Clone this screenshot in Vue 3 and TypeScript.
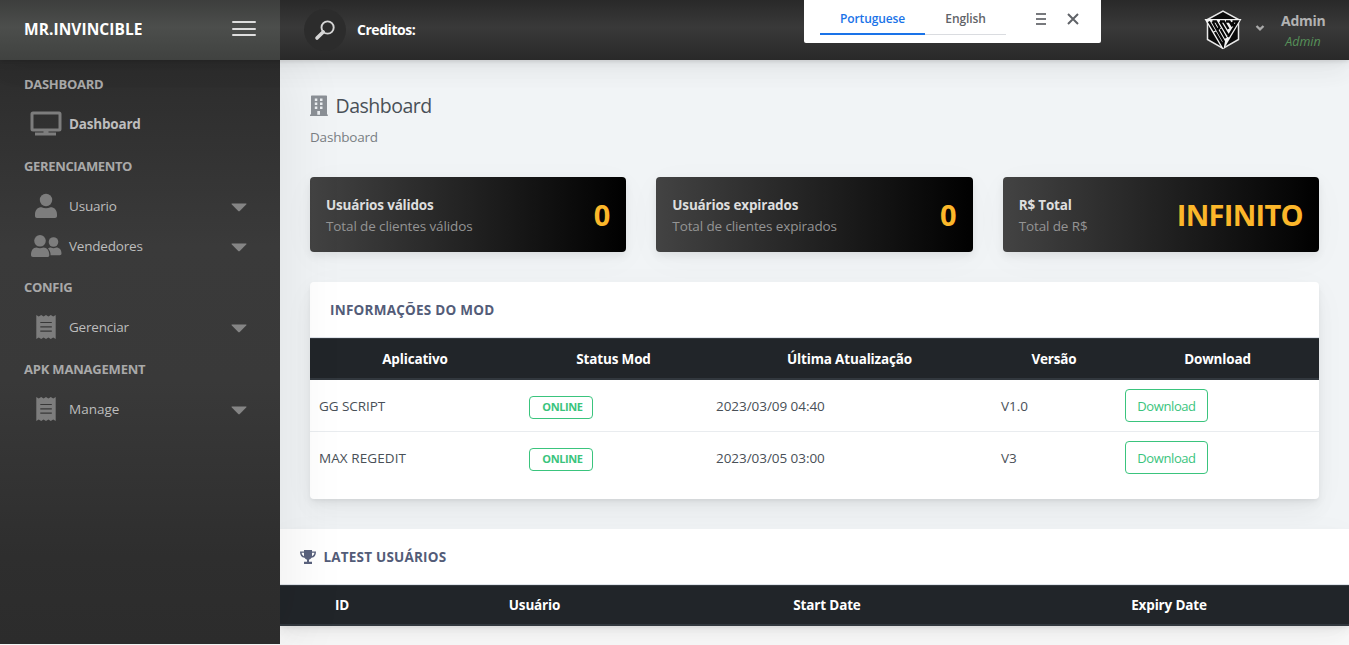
<script setup lang="ts">
interface MenuItem { label: string; icon: 'display' | 'user' | 'users' | 'bill'; cls: string; caret: boolean }
interface MenuGroup { title: string; cls: string; items: MenuItem[] }
interface Stat { title: string; sub: string; value: string; cls: string }
interface ModRow { app: string; cls: string; date: string; version: string }

const groups: MenuGroup[] = [
  { title: 'DASHBOARD', cls: 'g-dash', items: [{ label: 'Dashboard', icon: 'display', cls: 'active', caret: false }] },
  {
    title: 'GERENCIAMENTO', cls: 'g-ger', items: [
      { label: 'Usuario', icon: 'user', cls: '', caret: true },
      { label: 'Vendedores', icon: 'users', cls: '', caret: true },
    ],
  },
  { title: 'CONFIG', cls: 'g-conf', items: [{ label: 'Gerenciar', icon: 'bill', cls: '', caret: true }] },
  { title: 'APK MANAGEMENT', cls: 'g-apk', items: [{ label: 'Manage', icon: 'bill', cls: 'manage', caret: true }] },
]
const stats: Stat[] = [
  { title: 'Usuários válidos', sub: 'Total de clientes válidos', value: '0', cls: 'valid' },
  { title: 'Usuários expirados', sub: 'Total de clientes expirados', value: '0', cls: 'expired' },
  { title: 'R$ Total', sub: 'Total de R$', value: 'INFINITO', cls: 'total' },
]
const modHead: string[] = ['Aplicativo', 'Status Mod', 'Última Atualização', 'Versão', 'Download']
const mods: ModRow[] = [
  { app: 'GG SCRIPT', cls: 'gg', date: '2023/03/09 04:40', version: 'V1.0' },
  { app: 'MAX REGEDIT', cls: 'max', date: '2023/03/05 03:00', version: 'V3' },
]
const userHead: string[] = ['ID', 'Usuário', 'Start Date', 'Expiry Date']
</script>

<template>
  <div class="app">
    <header class="header">
      <div class="brand">
        <span class="brand-name">MR.INVINCIBLE</span>
        <button class="burger" aria-label="Menu"><i></i><i></i><i></i></button>
      </div>
      <div class="bar">
        <div class="search">
          <svg width="22" height="22" viewBox="0 0 22 22" fill="none" stroke="#d6d6d6">
            <circle cx="13.6" cy="8.500" r="6.1" stroke-width="1.9" />
            <path d="M9.200 12.900 3 19.100" stroke-width="3.6" stroke-linecap="round" />
          </svg>
        </div>
        <span class="credits">Creditos:</span>
        <div class="profile">
          <svg class="logo" width="38" height="40" viewBox="0 0 38 40">
            <path d="M19 1.200 34.500 9.500V29.500L19 38.500 3.500 29.500V9.500Z" fill="#0b0b0b" stroke="#e8e8e8" stroke-width="1.500" />
            <path d="M.5 9h37L19.800 39h-1.600Z" fill="#f3f3f3" />
            <path d="M8 9 19 4l11 5Z" fill="#0b0b0b" />
            <path d="M4.800 11.500 10.500 21M8.500 11.500 19.800 31.500 19 35.500 11 22M8.500 11.500h3.500l3.500 6-2.500 2.500M16.500 19l5.300 9.300" fill="none" stroke="#070707" stroke-width="2.300" />
            <path d="M16 11.500 24 25M16 11.500h4l4.500 7.500M22 11.500h3.500l3 5M28.500 11.500h5L24 27M28 12l2.500 4" fill="none" stroke="#070707" stroke-width="2.300" />
          </svg>
          <svg class="chev" width="10" height="8" viewBox="0 0 10 8"><path d="m1.500 2 3.500 3.400L8.500 2" fill="none" stroke="#aaa" stroke-width="2.3" /></svg>
          <div class="who"><b>Admin</b><em>Admin</em></div>
        </div>
      </div>
    </header>

    <div class="translate">
      <div class="tab on"><span>Portuguese</span></div>
      <div class="tab"><span>English</span></div>
      <svg class="lines" width="10" height="12" viewBox="0 0 10 12"><path d="M0 1h10M0 6h10M0 11h10" stroke="#77797d" stroke-width="2" /></svg>
      <svg class="close" width="12" height="12" viewBox="0 0 12 12"><path d="m1 1 10 10M11 1 1 11" stroke="#606368" stroke-width="2" /></svg>
    </div>

    <div class="body">
      <nav class="sidebar">
        <section v-for="g in groups" :key="g.title" class="group">
          <h5 :class="g.cls">{{ g.title }}</h5>
          <a v-for="m in g.items" :key="m.label" class="item" :class="m.cls">
            <span class="ico">
              <svg v-if="m.icon === 'display'" width="32" height="26" viewBox="0 0 32 26">
                <rect x="2" y="2" width="28" height="17" rx="1" fill="none" stroke="currentColor" stroke-width="3" />
                <path d="M13.500 20h5v1.500h7.500v3H5v-3h8.500z" fill="currentColor" />
              </svg>
              <svg v-else-if="m.icon === 'user'" width="32" height="26" viewBox="0 0 32 26" fill="currentColor">
                <circle cx="16" cy="7" r="6.200" />
                <path d="M5 25v-3.500c0-4.500 2.600-7.200 6.500-7.200 3 1.200 6 1.200 9 0 3.900 0 6.500 2.700 6.500 7.200V23c0 1.300-.8 2-2 2H7c-1.200 0-2-.7-2-2Z" />
              </svg>
              <svg v-else-if="m.icon === 'users'" width="32" height="26" viewBox="0 0 32 26" fill="currentColor">
                <circle cx="10" cy="7.800" r="5.800" /><circle cx="23.500" cy="9" r="4.800" />
                <path d="M1 22c0-4.500 2-7.500 5.500-7.500 2.300 1 4.700 1 7 0 3.500 0 5.800 3 5.800 7.500 0 1.400-.7 2-2 2H3c-1.300 0-2-.7-2-2Z" />
                <path d="M18 15.500c1-.8 1.800-.9 2.700-.9 1.900.8 3.700.8 5.600 0 3.200 0 5.200 2.300 5.200 6 0 1-.6 1.600-1.700 1.600h-9.200c0-2.700-.8-5-2.600-6.700Z" />
              </svg>
              <svg v-else width="32" height="26" viewBox="0 0 32 26">
                <path d="M6.300 1l2.400 1.500L11.200 1l2.400 1.500L16 1l2.400 1.500L20.800 1l2.400 1.500L25.700 1v24l-2.500-1.500-2.400 1.500-2.400-1.500L16 25l-2.400-1.500-2.400 1.500-2.500-1.500L6.300 25Z" fill="currentColor" />
                <path d="M10.300 8.500h11.500M10.300 12.800h11.500M10.300 17.200h11.500" stroke="#383838" stroke-width="1.200" />
              </svg>
            </span>
            <span class="lbl">{{ m.label }}</span>
            <svg v-if="m.caret" class="caret" width="16" height="9" viewBox="0 0 16 9"><path d="M1.200.5h13.600c.7 0 .9.500.4 1L9 7.700c-.7.700-1.300.7-2 0L.8 1.500C.3 1 .5.500 1.200.500Z" fill="#858585" /></svg>
          </a>
        </section>
      </nav>

      <main class="main">
        <div class="inner">
          <div class="title">
            <svg width="18" height="22" viewBox="0 0 18 22">
              <path d="M1 1.200Q1 .5 1.700.5h14.600q.7 0 .7.700v18.300h.8V21H0v-1.500h1Z" fill="#8b9096" />
              <path d="M4.800 3.500h2.500v2.500H4.800zM10 3.500h2.500v2.500H10zM4.800 7.500h2.500V10H4.800zM10 7.500h2.500V10H10zM4.800 11.500h2.500V14H4.800zM10 11.500h2.500V14H10zM7.300 16h2.700v3.700H7.300z" fill="#eceff2" />
            </svg>
            <h1>Dashboard</h1>
          </div>
          <p class="crumb">Dashboard</p>

          <div class="stats">
            <div v-for="s in stats" :key="s.title" class="stat" :class="s.cls">
              <div><b>{{ s.title }}</b><span class="sub">{{ s.sub }}</span></div>
              <strong>{{ s.value }}</strong>
            </div>
          </div>

          <section class="card">
            <h2 class="info">INFORMAÇÕES DO MOD</h2>
            <div class="thead mod"><span v-for="h in modHead" :key="h">{{ h }}</span></div>
            <div v-for="r in mods" :key="r.app" class="trow mod">
              <span :class="r.cls">{{ r.app }}</span>
              <span><i class="badge">ONLINE</i></span>
              <span class="date">{{ r.date }}</span>
              <span class="ver">{{ r.version }}</span>
              <span class="act"><button class="dl">Download</button></span>
            </div>
          </section>
        </div>

        <section class="card wide">
          <h2 class="latest">
            <svg width="16" height="14" viewBox="0 0 16 14">
              <path d="M4 0h8v1.500h4c0 3.800-1.500 5.800-4.500 6.300-.7 1-1.500 1.600-2.500 1.900v2.100h3V14H4v-2.200h3V9.700c-1-.3-1.800-.9-2.500-1.900C1.500 7.300 0 5.300 0 1.500h4Zm0 2.800H1.600c.2 1.700.9 2.800 2.400 3.400Zm8 0v3.400c1.500-.6 2.200-1.700 2.400-3.400Z" fill="#5a627d" />
            </svg>
            <span>LATEST USUÁRIOS</span>
          </h2>
          <div class="thead users"><span v-for="h in userHead" :key="h">{{ h }}</span></div>
        </section>
      </main>
    </div>
  </div>
</template>

<style>
html, body { margin: 0; overflow: hidden; }
</style>

<style scoped>
* { box-sizing: border-box; }
.app { position: relative; width: 1349px; height: 645px; overflow: hidden; display: flex; flex-direction: column; background: #fafafa; color: #495057; font: 14px/21px "Open Sans", "Noto Sans", sans-serif; }
h1, h2, h5, p { margin: 0; }
.header { position: relative; z-index: 3; display: flex; height: 60px; flex: none; box-shadow: 0 7px 35px rgba(4,9,20,.03), 0 15px 22px rgba(4,9,20,.03), 0 4px 8px rgba(4,9,20,.05), 0 2px 3px rgba(4,9,20,.06); }
.brand { width: 280px; display: flex; align-items: center; justify-content: space-between; padding: 0 24px; background: linear-gradient(#3d3e3d, #4c4e4c 45%, #404240); }
.brand-name { margin-top: -1px; font-size: 15.500px; font-weight: 700; color: #fff; letter-spacing: .07px; }
.burger { width: 24px; height: 15px; padding: 0; border: 0; background: none; display: flex; flex-direction: column; justify-content: space-between; margin-top: -3px; }
.burger i { height: 2px; background: #dedede; border-radius: 1px; }
.bar { flex: 1; display: flex; align-items: center; padding: 0 24px; background: linear-gradient(#292929, #393939 45%, #292929); }
.search { width: 42px; height: 42px; border-radius: 50%; background: #2c2c2c; display: flex; align-items: center; justify-content: center; }
.credits { margin: -1px 0 0 11px; color: #fff; font-weight: 700; letter-spacing: -.46px; }
.profile { margin-left: auto; display: flex; align-items: center; }
.logo { margin-top: -1px; }
.chev { margin: -4px 0 0 13px; }
.who { width: 44px; margin: 2px 0 0 16px; text-align: center; line-height: 20px; }
.who b { display: block; color: #b2b2b2; letter-spacing: -.25px; }
.who em { display: block; color: #579259; font-size: 12.500px; letter-spacing: 0; line-height: 21px; }

.translate { position: absolute; z-index: 5; left: 804px; top: 0; width: 297px; height: 43px; padding-left: 16px; display: flex; background: #fff; border-radius: 0 0 2px 2px; font-size: 12px; font-weight: 600; color: #5f6368; }
.tab { width: 81px; height: 35px; padding-top: 8px; text-align: center; border-bottom: 1px solid #dadce0; letter-spacing: -.1px; }
.tab.on { width: 105px; color: #1a73e8; border-bottom: 2px solid #1a73e8; letter-spacing: -.12px; }
.lines { margin: 13px 0 0 30px; }
.close { margin: 13px 0 0 21px; }

.body { display: flex; flex: 1; min-height: 0; }
.sidebar { position: relative; z-index: 2; width: 280px; height: 584px; flex: none; padding: 4px 24px 0; background: linear-gradient(#2c2c2c, #3a3a3a 32%, #393939 55%, #2e2e2e 85%, #2c2c2c); box-shadow: 7px 0 60px rgba(8,10,12,.07); color: #bdbdbd; }
.group { margin-bottom: 1.600px; }
.group h5 { height: 40px; line-height: 40px; font-size: 13px; font-weight: 700; color: #a9a9a9; letter-spacing: -.3px; white-space: nowrap; }
.group .g-ger { letter-spacing: -.35px; }
.group .g-apk { letter-spacing: -.2px; }
.item { display: flex; align-items: center; height: 40px; padding-left: 6px; }
.ico { width: 32px; height: 26px; color: #7d7d7d; margin-right: 7px; }
.ico svg { display: block; }
.item .lbl { margin-top: 1px; font-size: 13.500px; letter-spacing: -.2px; }
.item.active .lbl { font-weight: 700; letter-spacing: -.2px; }
.item.manage .lbl { letter-spacing: 0; }
.caret { margin-left: auto; margin-right: 9px; margin-top: 3px; }

.main { flex: 1; min-width: 0; background: #f1f4f6; height: 566px; }
.inner { padding: 30px 30px 0; height: 469px; }
.title { display: flex; align-items: center; height: 32px; }
.title svg { margin-bottom: 1px; }
.title h1 { margin-left: 7.500px; font-size: 19.500px; line-height: 32px; font-weight: 400; letter-spacing: -.5px; }
.crumb { height: 30px; line-height: 30px; font-size: 13.500px; color: #7a7f84; letter-spacing: -.2px; }
.stats { display: grid; grid-template-columns: repeat(3, 1fr); gap: 30px; margin-top: 25px; }
.stat { height: 75px; display: flex; align-items: center; justify-content: space-between; padding: 2px 16px 0; border-radius: 4px; background: linear-gradient(to right, #434343, #000); box-shadow: 0 7px 35px rgba(4,9,20,.03), 0 4px 8px rgba(4,9,20,.07); }
.stat b { display: block; margin-top: 1px; margin-bottom: -1px; font-size: 13.500px; color: #dedede; letter-spacing: -.18px; }
.stat .sub { color: #949494; font-size: 13.500px; letter-spacing: -.12px; }
.stat strong { margin-top: -2px; font-size: 29px; color: #fcb72a; line-height: 40px; }
.stat.total strong { letter-spacing: -.7px; }
.card { margin-top: 30px; height: 217px; background: #fff; border-radius: 4px; box-shadow: 0 7px 35px rgba(4,9,20,.03), 0 15px 22px rgba(4,9,20,.03), 0 4px 8px rgba(4,9,20,.05), 0 2px 3px rgba(4,9,20,.03); }
.card h2 { height: 56px; display: flex; align-items: center; padding: 1px 20px 0; border-bottom: 1px solid #dfe3e9; font-size: 13.500px; font-weight: 700; color: #535c78; }
.card h2.info { letter-spacing: .24px; }
.card.wide { margin: 0; height: 97px; border-radius: 0; }
.latest svg { margin-right: 7.500px; }
.latest span { letter-spacing: .2px; }
.thead { display: grid; height: 42px; align-items: center; text-align: center; background: #212529; color: #fff; font-weight: 700; font-size: 13.500px; border-top: 1px solid #32383e; border-bottom: 2px solid #32383e; letter-spacing: -.16px; }
.thead.mod { padding-top: 2px; }
.thead.users { height: 41px; }
.mod { grid-template-columns: 210px 187px 285px 124px 203px; }
.users { grid-template-columns: 124px 261px 324px 360px; }
.trow { display: grid; height: 52px; align-items: center; border-bottom: 1px solid #e9ecef; font-size: 13.500px; }
.trow:last-child { border-bottom-color: transparent; }
.trow > span { padding: 2px 0 0 9px; display: flex; letter-spacing: -.05px; }
.trow > .max { letter-spacing: .08px; }
.trow > .act { padding-top: 0; }
.badge { width: 64px; height: 23px; margin-top: 1px; padding-left: 3px; text-align: center; font-size: 11px; line-height: 20px; font-style: normal; font-weight: 700; letter-spacing: -.4px; color: #3ac47d; border: 1px solid #3ac47d; border-radius: 4px; }
.dl { width: 83px; height: 33px; padding: 0; background: transparent; color: #3ac47d; border: 1px solid #3ac47d; border-radius: 4px; font: 13px "Open Sans", sans-serif; letter-spacing: -.4px; }
</style>
